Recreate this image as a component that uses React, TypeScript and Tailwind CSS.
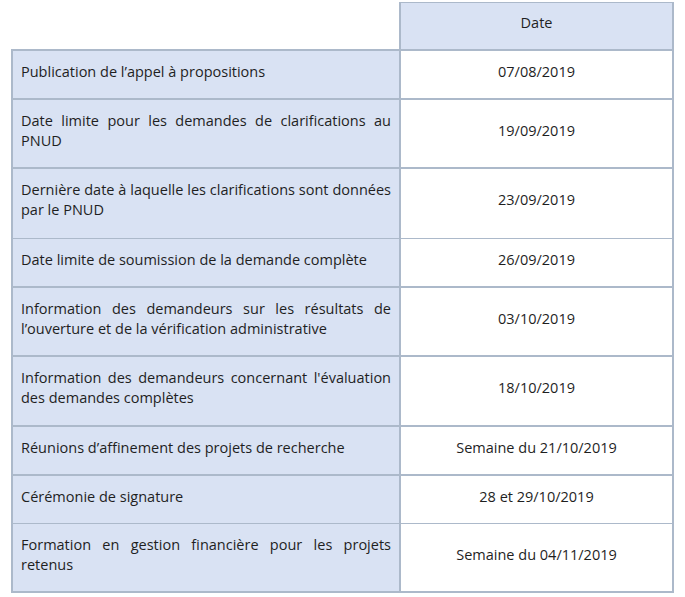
const rows: { label: string; date: string; thin?: boolean; pb?: string }[] = [
  { label: 'Publication de l\u2019appel à propositions', date: '07/08/2019' },
  { label: 'Date limite pour les demandes de clarifications au PNUD', date: '19/09/2019' },
  { label: 'Dernière date à laquelle les clarifications sont données par le PNUD', date: '23/09/2019', thin: true, pb: 'pb-[18px]' },
  { label: 'Date limite de soumission de la demande complète', date: '26/09/2019' },
  { label: 'Information des demandeurs sur les résultats de l\u2019ouverture et de la vérification administrative', date: '03/10/2019' },
  { label: 'Information des demandeurs concernant l\'évaluation des demandes complètes', date: '18/10/2019', pb: 'pb-[17px]' },
  { label: 'Réunions d\u2019affinement des projets de recherche', date: 'Semaine du 21/10/2019' },
  { label: 'Cérémonie de signature', date: '28 et 29/10/2019', thin: true },
  { label: 'Formation en gestion financière pour les projets retenus', date: 'Semaine du 04/11/2019' },
];

export default function App() {
  return (
    <div
      className="min-h-[597px] w-[685px] bg-white pl-[11px] pt-[2px] text-[14.5px] leading-[20px] text-[#1f1f1f]"
      style={{ fontFamily: '"Open Sans", "Noto Sans", sans-serif' }}
    >
      {/* header row: only the date column has a heading */}
      <div className="flex">
        <div className="w-[388px]" />
        <div className="flex w-[275px] items-center justify-center border-x-2 border-t border-[#acb9ca] bg-[#d9e2f3] pb-[16px] pt-[10px]">
          Date
        </div>
      </div>

      <div className="w-[663px] border-2 border-[#acb9ca]">
        {rows.map((row, i) => {
          const pb = row.pb ?? 'pb-[16px]';
          const border =
            i === rows.length - 1
              ? ''
              : row.thin
                ? 'border-b border-[#acb9ca]'
                : 'border-b-2 border-[#acb9ca]';
          return (
            <div key={i} className={`flex ${border}`}>
              <div className={`w-[388px] shrink-0 border-r-2 border-[#acb9ca] bg-[#d9e2f3] px-[8px] pt-[11px] text-justify ${pb}`}>
                {row.label}
              </div>
              <div className={`flex flex-1 items-center justify-center bg-white pt-[11px] ${pb}`}>
                {row.date}
              </div>
            </div>
          );
        })}
      </div>
    </div>
  );
}
